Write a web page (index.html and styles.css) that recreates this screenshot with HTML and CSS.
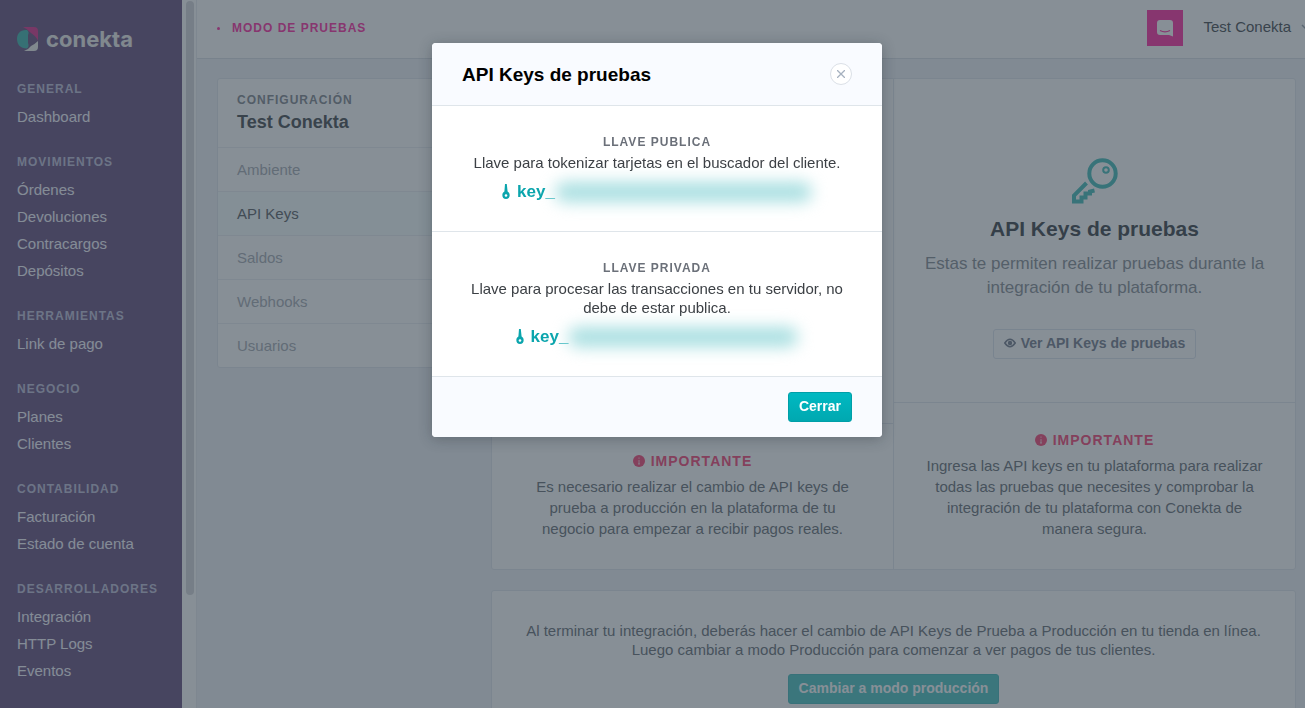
FILE: index.html
```html
<!DOCTYPE html>
<html lang="es">
<head>
  <meta charset="UTF-8">
  <title>Conekta - API Keys</title>
  <link rel="stylesheet" href="styles.css">
</head>
<body>

  <div class="app">
    <nav class="sidebar">
      <a class="logo" href="#">
        <svg width="22" height="26" viewBox="0 0 22 26">
          <path d="M10 4C3 3.500 0 8 0 13s3 9.500 10 9.500q2.500-2 1-5.500V9q1.500-3-1-5z" fill="#5cc0ba"/>
          <path d="M6 1h11q4 0 4 4v10Q19 10 14 7Q10 2.500 6 1z" fill="#e0509e"/>
          <path d="M7 25h10q4 0 4-4v-6Q18 18 14 20Q11 24 7 25z" fill="#f1f0ee"/>
        </svg>
        <span>conekta</span>
      </a>

      <h3>General</h3>
      <ul>
        <li><a href="#">Dashboard</a></li>
      </ul>
      <h3>Movimientos</h3>
      <ul>
        <li><a href="#">Órdenes</a></li>
        <li><a href="#">Devoluciones</a></li>
        <li><a href="#">Contracargos</a></li>
        <li><a href="#">Depósitos</a></li>
      </ul>
      <h3>Herramientas</h3>
      <ul>
        <li><a href="#">Link de pago</a></li>
      </ul>
      <h3>Negocio</h3>
      <ul>
        <li><a href="#">Planes</a></li>
        <li><a href="#">Clientes</a></li>
      </ul>
      <h3>Contabilidad</h3>
      <ul>
        <li><a href="#">Facturación</a></li>
        <li><a href="#">Estado de cuenta</a></li>
      </ul>
      <h3>Desarrolladores</h3>
      <ul>
        <li><a href="#">Integración</a></li>
        <li><a href="#">HTTP Logs</a></li>
        <li><a href="#">Eventos</a></li>
      </ul>
    </nav>
    <div class="scroll"><div class="scroll-thumb"></div></div>

    <div class="page">
      <header class="topbar">
        <span class="mode">Modo de pruebas</span>
        <button class="chat" aria-label="Chat">
          <svg width="16" height="18" viewBox="0 0 16 18">
            <path d="M3 1h10q3 0 3 3v13.500L12 16H3q-3 0-3-3V4q0-3 3-3z" fill="#fff"/>
            <path d="M3 11.500q5 2.600 10 0" fill="none" stroke="#ff4cb0" stroke-width="1.200"/>
          </svg>
        </button>
        <button class="user">Test Conekta
          <svg width="10" height="6" viewBox="0 0 10 6"><path d="M1 1l4 4 4-4" fill="none" stroke="#a8b0b8" stroke-width="1.500"/></svg>
        </button>
      </header>

      <main class="content">
        <aside class="card config">
          <div class="config-head">
            <p class="label">Configuración</p>
            <h2>Test Conekta</h2>
          </div>
          <a href="#">Ambiente</a>
          <a href="#" class="active">API Keys</a>
          <a href="#">Saldos</a>
          <a href="#">Webhooks</a>
          <a href="#">Usuarios</a>
        </aside>

        <div class="panels">
          <div class="card keys">
            <section class="column">
              <div class="column-top"></div>
              <div class="notice">
                <h4><svg width="12" height="12" viewBox="0 0 12 12"><circle cx="6" cy="6" r="6" fill="currentColor"/><path d="M6 2.500v1.300M6 5v4M5 9h2" stroke="#fff" stroke-opacity=".7"/></svg>Importante</h4>
                <p>Es necesario realizar el cambio de API keys de<br>prueba a producción en la plataforma de tu<br>negocio para empezar a recibir pagos reales.</p>
              </div>
            </section>
            <section class="column">
              <div class="column-top">
                <svg width="46" height="46" viewBox="0 0 46 46" fill="none" stroke="#61c7c4" stroke-width="4">
                  <circle cx="30.500" cy="15.500" r="13.200"/>
                  <circle cx="34" cy="12" r="2.800" stroke-width="2"/>
                  <path d="M14.500 25L2 37.500V43.500H9.500V39.500H13.500V35.500H18V33.500L22.500 32.500"/>
                </svg>
                <h1>API Keys de pruebas</h1>
                <p>Estas te permiten realizar pruebas durante la<br>integración de tu plataforma.</p>
                <button class="btn btn-light">
                  <svg width="12" height="10" viewBox="0 0 12 10"><path d="M.8 5q5.200-7.500 10.400 0q-5.200 7.500-10.400 0z" fill="none" stroke="currentColor" stroke-width="1.600"/><circle cx="6" cy="5" r="2.200" fill="currentColor"/></svg>
                  Ver API Keys de pruebas
                </button>
              </div>
              <div class="notice">
                <h4><svg width="12" height="12" viewBox="0 0 12 12"><circle cx="6" cy="6" r="6" fill="currentColor"/><path d="M6 2.500v1.300M6 5v4M5 9h2" stroke="#fff" stroke-opacity=".7"/></svg>Importante</h4>
                <p>Ingresa las API keys en tu plataforma para realizar<br>todas las pruebas que necesites y comprobar la<br>integración de tu plataforma con Conekta de<br>manera segura.</p>
              </div>
            </section>
          </div>

          <div class="card switch">
            <p>Al terminar tu integración, deberás hacer el cambio de API Keys de Prueba a Producción en tu tienda en línea.<br>Luego cambiar a modo Producción para comenzar a ver pagos de tus clientes.</p>
            <button class="btn btn-primary">Cambiar a modo producción</button>
          </div>
        </div>
      </main>
    </div>
  </div>

  <div class="overlay">
    <div class="modal" role="dialog" aria-labelledby="modal-title">
      <div class="modal-header">
        <h2 id="modal-title">API Keys de pruebas</h2>
        <button class="close" aria-label="Cerrar ventana">
          <svg width="8" height="8" viewBox="0 0 8 8"><path d="M0 0l8 8M8 0L0 8" stroke="#a6b1bf" stroke-width="1.300"/></svg>
        </button>
      </div>
      <div class="modal-section">
        <p class="label">Llave publica</p>
        <p class="text">Llave para tokenizar tarjetas en el buscador del cliente.</p>
        <div class="key">
          <svg width="8" height="16" viewBox="0 0 8 16"><path d="M3 0h1.800l.8 7.500C9 9.500 8 15 4 15S-1 9.500 2.400 7.500z" fill="currentColor"/><circle cx="4" cy="11.500" r="1.300" fill="#fff"/></svg>
          <span>key_</span><span class="secret"></span>
        </div>
      </div>
      <div class="modal-section">
        <p class="label">Llave privada</p>
        <p class="text">Llave para procesar las transacciones en tu servidor, no<br>debe de estar publica.</p>
        <div class="key">
          <svg width="8" height="16" viewBox="0 0 8 16"><path d="M3 0h1.800l.8 7.500C9 9.500 8 15 4 15S-1 9.500 2.400 7.500z" fill="currentColor"/><circle cx="4" cy="11.500" r="1.300" fill="#fff"/></svg>
          <span>key_</span><span class="secret secret-short"></span>
        </div>
      </div>
      <div class="modal-footer">
        <button class="btn btn-primary">Cerrar</button>
      </div>
    </div>
  </div>

</body>
</html>
```
FILE: styles.css
```css
* {
  box-sizing: border-box;
}

body {
  margin: 0;
  font-family: "Liberation Sans", Arial, sans-serif;
  font-size: 15px;
  line-height: 19px;
  color: #63676b;
  background: #f3f5f9;
  overflow: hidden;
}

h1, h2, h3, h4, p, ul {
  margin: 0;
  padding: 0;
}

a {
  color: inherit;
  text-decoration: none;
}

button {
  font-family: inherit;
  cursor: pointer;
}

svg {
  flex-shrink: 0;
}

.app {
  display: flex;
  height: 100vh;
  overflow: hidden;
}

/* sidebar */
.sidebar {
  flex: 0 0 182px;
  padding: 26px 17px 0;
  background: #7f6b93;
  color: #f8f8ff;
  overflow: hidden;
}

.logo {
  display: flex;
  align-items: center;
  gap: 7px;
  height: 26px;
  margin-bottom: 28px;
  color: #f1f0ee;
  font-family: Inter, sans-serif;
  font-size: 22px;
  font-weight: 700;
}

.sidebar h3 {
  margin-bottom: 5px;
  font-size: 12px;
  line-height: 18px;
  letter-spacing: 1px;
  text-transform: uppercase;
  color: #c9c9df;
}

.sidebar ul {
  list-style: none;
  margin-bottom: 23px;
}

.sidebar li {
  line-height: 27px;
}

.scroll {
  flex: 0 0 14px;
  padding: 1px 2px 0 4px;
  background: #fff;
}

.scroll-thumb {
  height: 84%;
  background: #dcdde0;
  border-radius: 4px;
}

/* top bar */
.page {
  flex: 1;
  min-width: 0;
  border-left: 1px solid #eceef3;
}

.topbar {
  display: flex;
  align-items: center;
  height: 59px;
  padding-left: 20px;
  padding-bottom: 2px;
  background: #fff;
  border-bottom: 1px solid #e0e4ea;
  overflow: hidden;
}

.mode {
  flex: 1;
  color: #ff4cb0;
  font-size: 12px;
  font-weight: bold;
  letter-spacing: 1px;
  text-transform: uppercase;
}

.mode::before {
  content: "";
  display: inline-block;
  width: 3px;
  height: 3px;
  margin-right: 12px;
  border-radius: 50%;
  background: #ff4cb0;
  vertical-align: middle;
}

.chat {
  display: flex;
  align-items: center;
  justify-content: center;
  width: 36px;
  height: 36px;
  margin-right: 20px;
  padding: 0;
  border: 0;
  background: #ff4cb0;
}

.user {
  display: flex;
  align-items: center;
  gap: 10px;
  margin-right: -6px;
  padding: 0 0 3px;
  border: 0;
  background: none;
  color: #63676b;
  font-size: 15px;
}

/* cards */
.content {
  display: flex;
  align-items: flex-start;
  gap: 20px;
  padding: 19px 9px 20px 20px;
}

.card {
  background: #fff;
  border: 1px solid #e7eaf0;
  border-radius: 3px;
}

.config {
  flex: 0 0 254px;
}

.config-head {
  padding: 12px 19px 13px;
}

.config-head h2 {
  margin-top: 2px;
  font-size: 18px;
  line-height: 23px;
}

.label {
  font-size: 12px;
  font-weight: bold;
  line-height: 18px;
  letter-spacing: 1px;
  text-transform: uppercase;
  color: #9499a0;
}

.config a {
  display: block;
  padding: 0 19px;
  border-top: 1px solid #eef1f5;
  line-height: 43px;
  color: #b4b8bf;
}

.config .active {
  background: #f8feff;
  color: #74787c;
}

.panels {
  flex: 1;
}

.keys {
  display: flex;
  text-align: center;
}

.column {
  flex: 1;
  display: flex;
  flex-direction: column;
}

.column + .column {
  border-left: 1px solid #e7eaf0;
}

.column-top {
  flex: 1;
  padding: 79px 20px 43px;
}

.column-top h1 {
  margin: 12px 0 10px;
  font-size: 21px;
  line-height: 26px;
  color: #5a5f64;
}

.column-top p {
  margin-bottom: 29px;
  font-size: 17px;
  line-height: 24px;
  color: #999ea5;
}

.column-top > svg {
  display: block;
  margin: 0 auto;
}

.notice {
  padding: 27px 20px 30px;
  border-top: 1px solid #e7eaf0;
  line-height: 21px;
  color: #80858b;
}

.notice h4 {
  display: flex;
  align-items: center;
  justify-content: center;
  gap: 6px;
  margin-bottom: 4px;
  font-size: 14px;
  letter-spacing: 1px;
  text-transform: uppercase;
  color: #f8608a;
}

.notice h4 svg {
  margin-bottom: 2px;
}

.switch {
  margin-top: 20px;
  padding: 30px 20px;
  text-align: center;
  color: #80858b;
}

.switch .btn {
  margin-top: 15px;
}

/* buttons */
.btn {
  height: 30px;
  padding: 0 10px 2px;
  border: 1px solid;
  border-radius: 3px;
  font-size: 14px;
  font-weight: bold;
}

.btn-primary {
  border-color: #009fa8;
  background: linear-gradient(#00b9c2, #00a8b0);
  color: #fff;
}

.switch .btn-primary {
  border-color: #61c3c4;
  background: #66cccb;
}

.btn-light {
  border-color: #e3e8f0;
  background: #fff;
  color: #8a909e;
}

.btn-light svg {
  margin-right: 1px;
}

/* modal */
.overlay {
  position: fixed;
  inset: 0;
  display: flex;
  align-items: flex-start;
  justify-content: center;
  padding: 43px 0 0 9px;
  background: rgba(15, 31, 45, 0.5);
}

.modal {
  width: 450px;
  background: #fff;
  border-radius: 4px;
  box-shadow: 0 2px 14px rgba(20, 30, 40, 0.3);
  text-align: center;
  overflow: hidden;
}

.modal-header {
  display: flex;
  align-items: center;
  justify-content: space-between;
  height: 63px;
  padding: 0 30px;
  background: #f9fbff;
  border-bottom: 1px solid #dfe5ea;
}

.modal-header h2 {
  font-size: 19px;
  color: #000;
}

.close {
  display: flex;
  align-items: center;
  justify-content: center;
  width: 22px;
  height: 22px;
  padding: 0;
  border: 1px solid #dbe0e7;
  border-radius: 50%;
  background: #fff;
}

.modal-section {
  padding: 27px 30px 27px;
  border-bottom: 1px solid #dfe5ea;
  color: #3c4045;
}

.modal-section .label {
  margin-bottom: 2px;
  color: #6b7079;
}

.key {
  display: flex;
  align-items: center;
  justify-content: center;
  margin-top: 8px;
  color: #0ba5ad;
  font-size: 17px;
  font-weight: bold;
  line-height: 24px;
}

.key svg {
  margin-right: 7px;
}

.secret {
  width: 257px;
  height: 20px;
  background: #a9dfe1;
  border-radius: 10px;
  filter: blur(8px);
}

.secret-short {
  width: 230px;
}

.modal-footer {
  display: flex;
  justify-content: flex-end;
  padding: 15px 30px;
  background: #f9fbff;
}
```
